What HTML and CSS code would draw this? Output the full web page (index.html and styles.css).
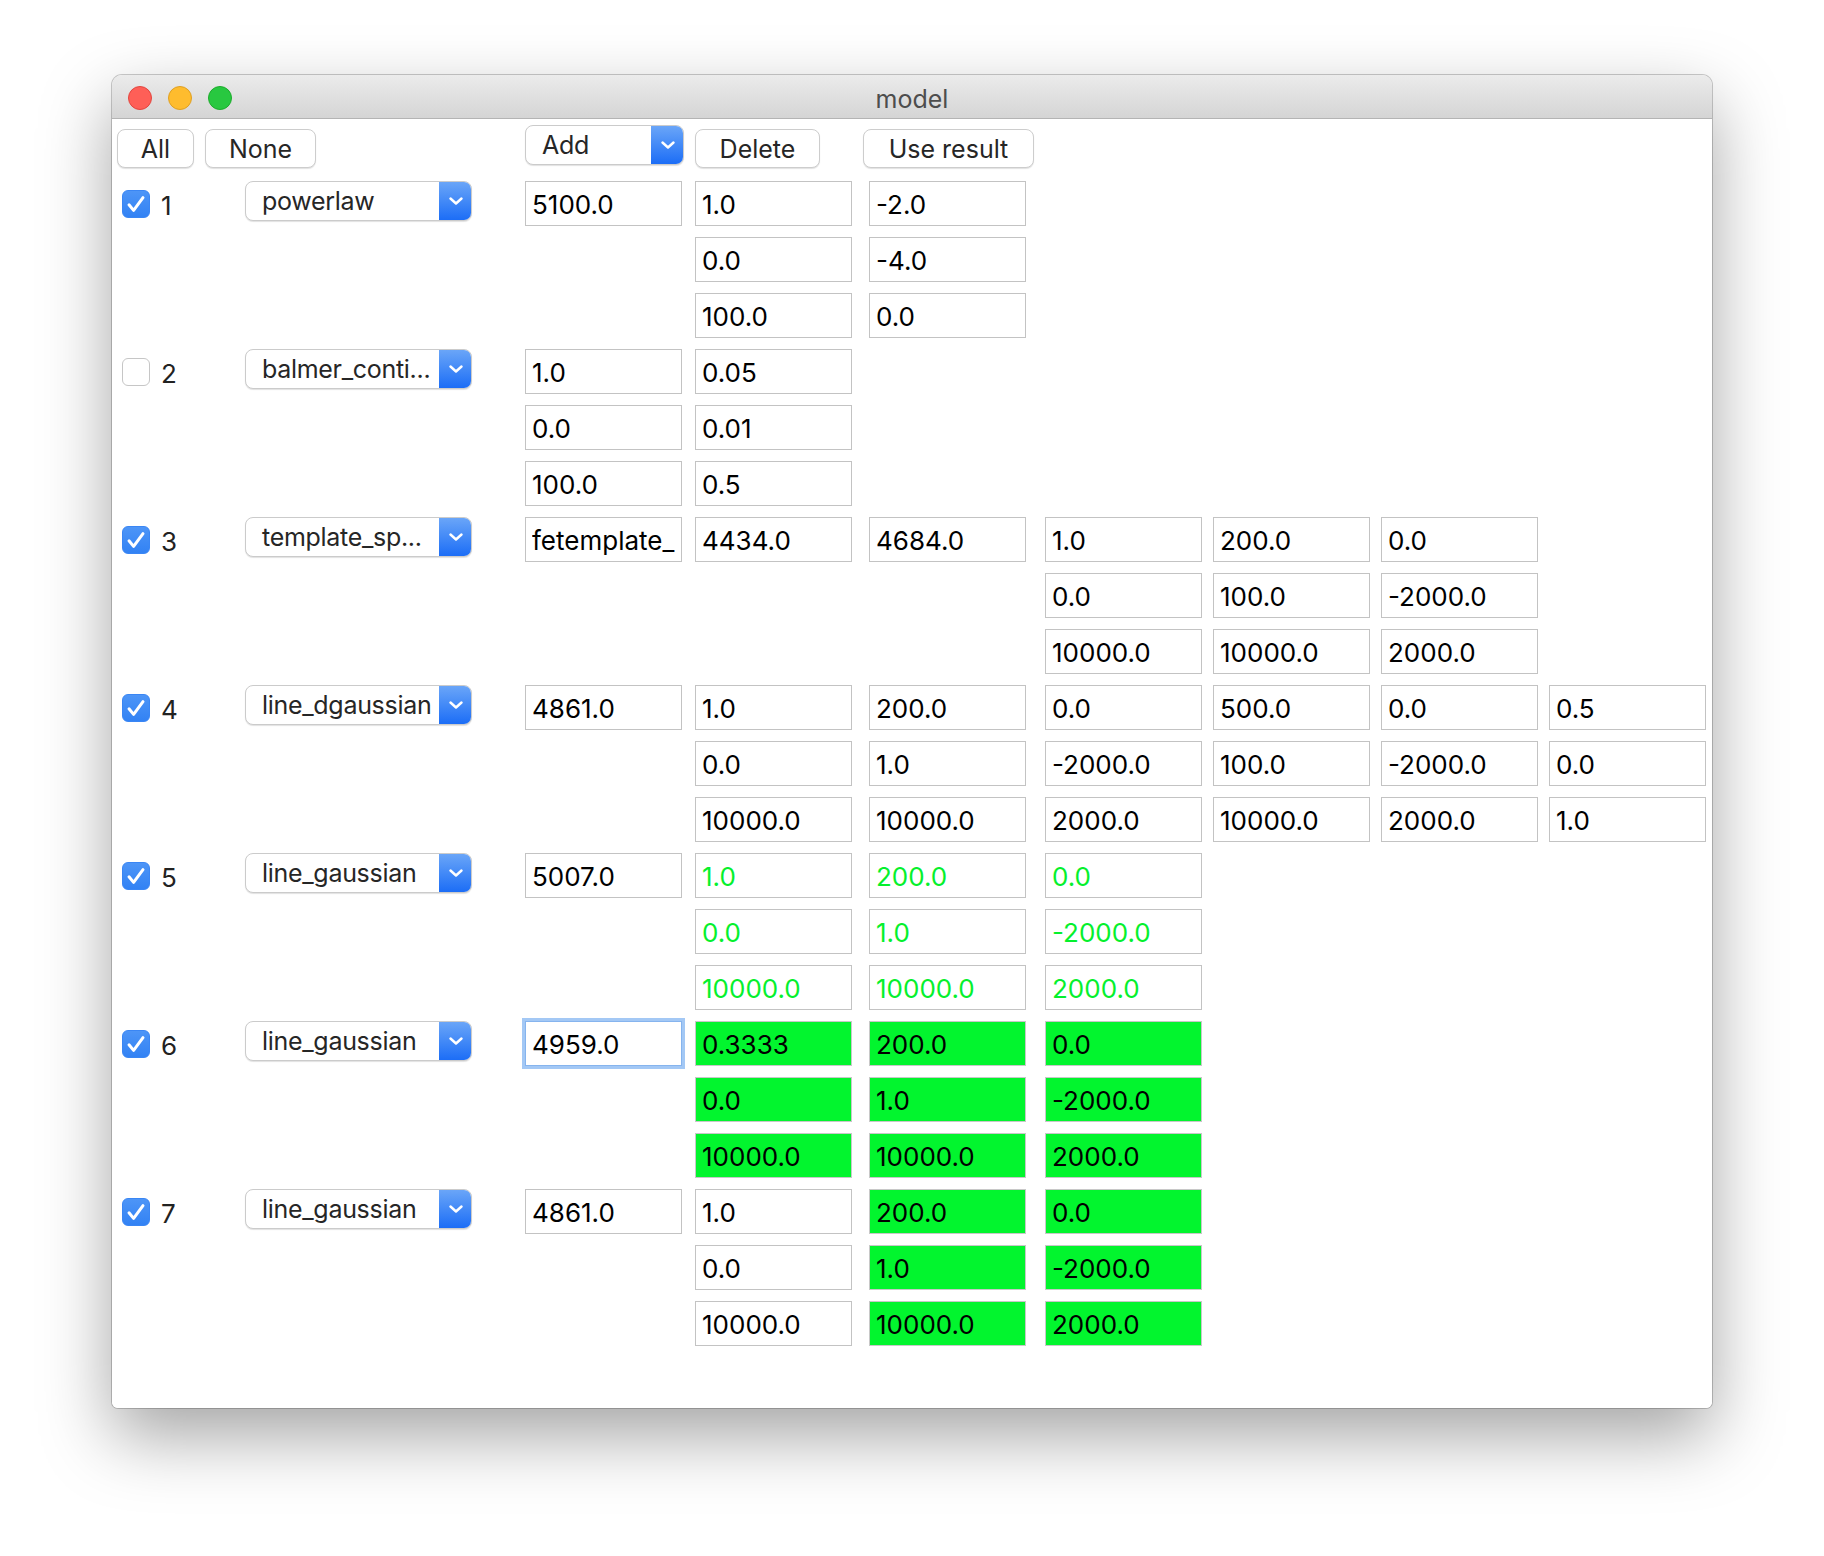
FILE: index.html
```html
<!DOCTYPE html>
<html lang="en">
<head>
<meta charset="utf-8">
<title>model</title>
<link rel="stylesheet" href="styles.css">
</head>
<body>
<div class="window">
  <div class="titlebar">
    <div class="lights">
      <span class="light red"></span>
      <span class="light yellow"></span>
      <span class="light green"></span>
    </div>
    <div class="title">model</div>
    <div></div>
  </div>
  <div class="content">
    <div class="toolbar grid">
      <div class="selbtns">
        <button class="btn btn-all">All</button>
        <button class="btn btn-none">None</button>
      </div>
      <div class="combo combo-add"><span class="combo-text">Add</span><span class="combo-arrow"><svg viewBox="0 0 14 8" width="14" height="8"><path d="M1.5 1.5 L7 6.5 L12.5 1.5"/></svg></span></div>
      <button class="btn btn-delete">Delete</button>
      <button class="btn btn-use">Use result</button>
    </div>

    <div class="models">
      <!-- 1 -->
      <div class="model grid">
        <div class="sel"><span class="check on"><svg viewBox="0 0 28 28"><path d="M7 14.8 L11.6 20.4 L21 7.6"/></svg></span><span class="num">1</span></div>
        <div class="combo"><span class="combo-text">powerlaw</span><span class="combo-arrow"><svg viewBox="0 0 14 8" width="14" height="8"><path d="M1.5 1.5 L7 6.5 L12.5 1.5"/></svg></span></div>
        <div class="col"><input class="field" type="text" value="5100.0" readonly></div>
        <div class="col"><input class="field" type="text" value="1.0" readonly><input class="field" type="text" value="0.0" readonly><input class="field" type="text" value="100.0" readonly></div>
        <div class="col"><input class="field" type="text" value="-2.0" readonly><input class="field" type="text" value="-4.0" readonly><input class="field" type="text" value="0.0" readonly></div>
      </div>
      <!-- 2 -->
      <div class="model grid">
        <div class="sel"><span class="check"></span><span class="num">2</span></div>
        <div class="combo"><span class="combo-text">balmer_conti...</span><span class="combo-arrow"><svg viewBox="0 0 14 8" width="14" height="8"><path d="M1.5 1.5 L7 6.5 L12.5 1.5"/></svg></span></div>
        <div class="col"><input class="field" type="text" value="1.0" readonly><input class="field" type="text" value="0.0" readonly><input class="field" type="text" value="100.0" readonly></div>
        <div class="col"><input class="field" type="text" value="0.05" readonly><input class="field" type="text" value="0.01" readonly><input class="field" type="text" value="0.5" readonly></div>
      </div>
      <!-- 3 -->
      <div class="model grid">
        <div class="sel"><span class="check on"><svg viewBox="0 0 28 28"><path d="M7 14.8 L11.6 20.4 L21 7.6"/></svg></span><span class="num">3</span></div>
        <div class="combo"><span class="combo-text">template_sp...</span><span class="combo-arrow"><svg viewBox="0 0 14 8" width="14" height="8"><path d="M1.5 1.5 L7 6.5 L12.5 1.5"/></svg></span></div>
        <div class="col"><input class="field" type="text" value="fetemplate_" readonly></div>
        <div class="col"><input class="field" type="text" value="4434.0" readonly></div>
        <div class="col"><input class="field" type="text" value="4684.0" readonly></div>
        <div class="col"><input class="field" type="text" value="1.0" readonly><input class="field" type="text" value="0.0" readonly><input class="field" type="text" value="10000.0" readonly></div>
        <div class="col"><input class="field" type="text" value="200.0" readonly><input class="field" type="text" value="100.0" readonly><input class="field" type="text" value="10000.0" readonly></div>
        <div class="col"><input class="field" type="text" value="0.0" readonly><input class="field" type="text" value="-2000.0" readonly><input class="field" type="text" value="2000.0" readonly></div>
      </div>
      <!-- 4 -->
      <div class="model grid">
        <div class="sel"><span class="check on"><svg viewBox="0 0 28 28"><path d="M7 14.8 L11.6 20.4 L21 7.6"/></svg></span><span class="num">4</span></div>
        <div class="combo"><span class="combo-text">line_dgaussian</span><span class="combo-arrow"><svg viewBox="0 0 14 8" width="14" height="8"><path d="M1.5 1.5 L7 6.5 L12.5 1.5"/></svg></span></div>
        <div class="col"><input class="field" type="text" value="4861.0" readonly></div>
        <div class="col"><input class="field" type="text" value="1.0" readonly><input class="field" type="text" value="0.0" readonly><input class="field" type="text" value="10000.0" readonly></div>
        <div class="col"><input class="field" type="text" value="200.0" readonly><input class="field" type="text" value="1.0" readonly><input class="field" type="text" value="10000.0" readonly></div>
        <div class="col"><input class="field" type="text" value="0.0" readonly><input class="field" type="text" value="-2000.0" readonly><input class="field" type="text" value="2000.0" readonly></div>
        <div class="col"><input class="field" type="text" value="500.0" readonly><input class="field" type="text" value="100.0" readonly><input class="field" type="text" value="10000.0" readonly></div>
        <div class="col"><input class="field" type="text" value="0.0" readonly><input class="field" type="text" value="-2000.0" readonly><input class="field" type="text" value="2000.0" readonly></div>
        <div class="col"><input class="field" type="text" value="0.5" readonly><input class="field" type="text" value="0.0" readonly><input class="field" type="text" value="1.0" readonly></div>
      </div>
      <!-- 5 -->
      <div class="model grid">
        <div class="sel"><span class="check on"><svg viewBox="0 0 28 28"><path d="M7 14.8 L11.6 20.4 L21 7.6"/></svg></span><span class="num">5</span></div>
        <div class="combo"><span class="combo-text">line_gaussian</span><span class="combo-arrow"><svg viewBox="0 0 14 8" width="14" height="8"><path d="M1.5 1.5 L7 6.5 L12.5 1.5"/></svg></span></div>
        <div class="col"><input class="field" type="text" value="5007.0" readonly></div>
        <div class="col"><input class="field tied" type="text" value="1.0" readonly><input class="field tied" type="text" value="0.0" readonly><input class="field tied" type="text" value="10000.0" readonly></div>
        <div class="col"><input class="field tied" type="text" value="200.0" readonly><input class="field tied" type="text" value="1.0" readonly><input class="field tied" type="text" value="10000.0" readonly></div>
        <div class="col"><input class="field tied" type="text" value="0.0" readonly><input class="field tied" type="text" value="-2000.0" readonly><input class="field tied" type="text" value="2000.0" readonly></div>
      </div>
      <!-- 6 -->
      <div class="model grid">
        <div class="sel"><span class="check on"><svg viewBox="0 0 28 28"><path d="M7 14.8 L11.6 20.4 L21 7.6"/></svg></span><span class="num">6</span></div>
        <div class="combo"><span class="combo-text">line_gaussian</span><span class="combo-arrow"><svg viewBox="0 0 14 8" width="14" height="8"><path d="M1.5 1.5 L7 6.5 L12.5 1.5"/></svg></span></div>
        <div class="col"><input class="field focus" type="text" value="4959.0" readonly></div>
        <div class="col"><input class="field fixed" type="text" value="0.3333" readonly><input class="field fixed" type="text" value="0.0" readonly><input class="field fixed" type="text" value="10000.0" readonly></div>
        <div class="col"><input class="field fixed" type="text" value="200.0" readonly><input class="field fixed" type="text" value="1.0" readonly><input class="field fixed" type="text" value="10000.0" readonly></div>
        <div class="col"><input class="field fixed" type="text" value="0.0" readonly><input class="field fixed" type="text" value="-2000.0" readonly><input class="field fixed" type="text" value="2000.0" readonly></div>
      </div>
      <!-- 7 -->
      <div class="model grid">
        <div class="sel"><span class="check on"><svg viewBox="0 0 28 28"><path d="M7 14.8 L11.6 20.4 L21 7.6"/></svg></span><span class="num">7</span></div>
        <div class="combo"><span class="combo-text">line_gaussian</span><span class="combo-arrow"><svg viewBox="0 0 14 8" width="14" height="8"><path d="M1.5 1.5 L7 6.5 L12.5 1.5"/></svg></span></div>
        <div class="col"><input class="field" type="text" value="4861.0" readonly></div>
        <div class="col"><input class="field" type="text" value="1.0" readonly><input class="field" type="text" value="0.0" readonly><input class="field" type="text" value="10000.0" readonly></div>
        <div class="col"><input class="field fixed" type="text" value="200.0" readonly><input class="field fixed" type="text" value="1.0" readonly><input class="field fixed" type="text" value="10000.0" readonly></div>
        <div class="col"><input class="field fixed" type="text" value="0.0" readonly><input class="field fixed" type="text" value="-2000.0" readonly><input class="field fixed" type="text" value="2000.0" readonly></div>
      </div>
    </div>
  </div>
</div>
</body>
</html>
```
FILE: styles.css
```css
html, body {
  margin: 0;
  padding: 0;
  background: #ffffff;
}

body {
  box-sizing: border-box;
  min-height: 1556px;
  padding: 75px 0 148px 112px;
  font-family: Inter, "Liberation Sans", sans-serif;
  font-size: 26px;
  color: #262626;
}

.window {
  width: 1600px;
  height: 1333px;
  background: #ffffff;
  border-radius: 10px 10px 6px 6px;
  box-shadow: 0 0 0 1px rgba(0, 0, 0, 0.2), 0 28px 70px rgba(0, 0, 0, 0.36);
  overflow: hidden;
  display: flex;
  flex-direction: column;
}

/* ---------- title bar ---------- */
.titlebar {
  height: 43px;
  flex: none;
  display: grid;
  grid-template-columns: 1fr auto 1fr;
  align-items: center;
  background: linear-gradient(#ebebeb, #d5d5d5);
  border-bottom: 1px solid #b4b4b4;
}

.lights {
  display: flex;
  gap: 16px;
  padding-left: 16px;
  margin-top: 2px;
}

.light {
  width: 22px;
  height: 22px;
  border-radius: 50%;
  border: 1px solid transparent;
}

.light.red { background: #fe5f57; border-color: #e2463f; }
.light.yellow { background: #febc2e; border-color: #dfa023; }
.light.green { background: #28c840; border-color: #1dac2c; }

.title {
  color: #4d4d4d;
  font-size: 25px;
  margin-top: 4px;
}

/* ---------- content ---------- */
.content {
  flex: 1;
  background: #ffffff;
}

.grid {
  display: grid;
  grid-template-columns: 123px 280px 170px 174px 176px 168px 168px 168px 163px;
  padding-left: 10px;
  align-items: start;
}

.toolbar {
  height: 62px;
}

.selbtns {
  grid-column: 1 / 3;
  display: flex;
  gap: 11px;
  margin-left: -5px;
  margin-top: 10px;
}

.btn {
  height: 39px;
  padding: 2px 0 0;
  border: 1px solid #cdcdcd;
  border-radius: 8px;
  background: #ffffff;
  box-shadow: 0 1px 1px rgba(0, 0, 0, 0.12);
  font-family: inherit;
  font-size: 25px;
  color: #262626;
  line-height: 35px;
  text-align: center;
}

.btn-all { width: 77px; }
.btn-none { width: 111px; }

.btn-delete {
  width: 125px;
  margin-top: 10px;
}

.btn-use {
  width: 171px;
  margin-top: 10px;
  margin-left: -6px;
}

/* combo box */
.combo {
  width: 227px;
  height: 40px;
  display: flex;
  border: 1px solid #cbcbcb;
  border-radius: 8px;
  background: #ffffff;
  box-shadow: 0 1px 1px rgba(0, 0, 0, 0.12);
  box-sizing: border-box;
  overflow: hidden;
}

.combo-add {
  width: 159px;
  margin-top: 6px;
}

.combo-text {
  flex: 1;
  padding: 1px 0 0 16px;
  font-size: 25px;
  letter-spacing: -0.3px;
  line-height: 37px;
  white-space: nowrap;
  overflow: hidden;
  color: #262626;
}

.combo-arrow {
  width: 33px;
  flex: none;
  margin: -1px -1px -1px 0;
  background: linear-gradient(#6ca7f8, #1a6cf6);
  display: flex;
  align-items: center;
  justify-content: center;
}

.combo-arrow svg path {
  fill: none;
  stroke: #ffffff;
  stroke-width: 2.4;
  stroke-linecap: round;
  stroke-linejoin: round;
}

/* model rows */
.models {
  display: flex;
  flex-direction: column;
  gap: 11px;
}

.sel {
  height: 45px;
  display: flex;
  align-items: center;
}

.check {
  width: 28px;
  height: 28px;
  box-sizing: border-box;
  border-radius: 6px;
  border: 1px solid #c6c6c6;
  background: #ffffff;
  display: flex;
  margin-top: 1px;
}

.check.on {
  border-color: #3a86f4;
  background: linear-gradient(#4d95f7, #3282f4);
}

.check svg {
  width: 28px;
  height: 28px;
  margin: -1px;
}

.check svg path {
  fill: none;
  stroke: #ffffff;
  stroke-width: 3;
  stroke-linecap: round;
  stroke-linejoin: round;
}

.num {
  margin-left: 11px;
  margin-top: 3px;
  color: #222222;
  font-size: 26px;
}

.col {
  display: flex;
  flex-direction: column;
  gap: 11px;
}

.field {
  width: 157px;
  height: 45px;
  box-sizing: border-box;
  margin: 0;
  padding: 2px 0 0 6px;
  border: 1px solid #c3c3c3;
  border-radius: 0;
  background: #ffffff;
  font-family: Inter, "Liberation Sans", sans-serif;
  font-size: 26px;
  color: #000000;
  outline: none;
}

.field.tied {
  color: #05f02d;
}

.field.fixed {
  background: #02f52e;
  border-color: #c8c8c8;
}

.field.focus {
  border-color: #86b4ee;
  box-shadow: 0 0 0 3px #a3c8f5;
}
```
